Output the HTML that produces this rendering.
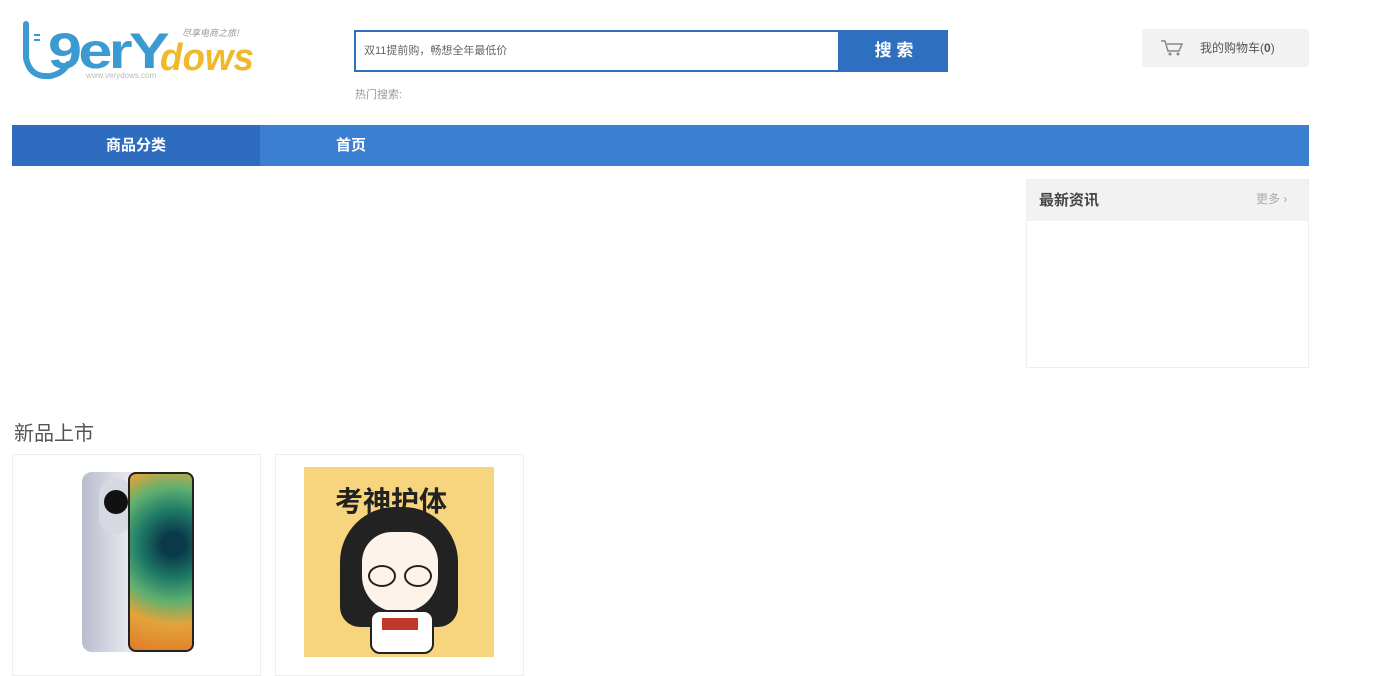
<!DOCTYPE html>
<html><head><meta charset="utf-8"><style>
body{margin:0;width:1378px;height:668px;background:#fff;font-family:"Liberation Sans","Noto Sans CJK SC",sans-serif;position:relative;overflow:hidden}
.a{position:absolute}
</style></head><body>
<!-- logo -->
<svg class="a" style="left:20px;top:18px" width="245" height="66" viewBox="0 0 245 66">
<path d="M6 6 V40 Q10 60 30 58 Q42 56 48 46" fill="none" stroke="#3b9ad0" stroke-width="6" stroke-linecap="round"/>
<rect x="14" y="16" width="6" height="2" fill="#3b9ad0"/><rect x="14" y="21" width="6" height="2" fill="#3b9ad0"/>
<text x="28" y="50" font-family="Liberation Sans" font-weight="bold" font-size="50" fill="#3b9ad0" letter-spacing="-3" textLength="118" lengthAdjust="spacingAndGlyphs">9erY</text>
<text x="140" y="52" font-family="Liberation Sans" font-weight="bold" font-style="italic" font-size="38" fill="#f0b92a" textLength="94" lengthAdjust="spacingAndGlyphs">dows</text>
<text x="162" y="18" font-family="Noto Sans CJK SC" font-style="italic" font-size="9" fill="#999">尽享电商之旅!</text>
<text x="66" y="60" font-size="8" fill="#bbb">www.verydows.com</text>
</svg>
<!-- search -->
<div class="a" style="left:354px;top:30px;width:482px;height:38px;border:2px solid #2f6fbf;font-size:11px;color:#666;line-height:38px;text-indent:8px;font-family:'Liberation Sans','Noto Sans CJK SC',sans-serif">双11提前购，畅想全年最低价</div>
<div class="a" style="left:840px;top:30px;width:108px;height:42px;background:#2f6fbf;color:#fff;font-weight:bold;font-size:17px;text-align:center;line-height:42px">搜 索</div>
<div class="a" style="left:355px;top:86px;font-size:11px;color:#999">热门搜索:</div>
<!-- cart -->
<div class="a" style="left:1142px;top:29px;width:167px;height:38px;background:#f2f2f2;border-radius:3px;font-size:12px;color:#555;line-height:38px">
<svg class="a" style="left:18px;top:10px" width="26" height="18" viewBox="0 0 26 18"><path d="M1 2h4l3 10h11l3-7H7" fill="none" stroke="#888" stroke-width="1.5"/><circle cx="10" cy="15" r="1.5" fill="#888"/><circle cx="18" cy="15" r="1.5" fill="#888"/></svg>
<span class="a" style="left:58px">我的购物车(<b>0</b>)</span></div>
<!-- nav -->
<div class="a" style="left:12px;top:125px;width:1297px;height:41px;background:#3a7fd0"></div>
<div class="a" style="left:12px;top:125px;width:248px;height:41px;background:#2d6cbf;color:#fff;font-weight:bold;font-size:15px;text-align:center;line-height:41px">商品分类</div>
<div class="a" style="left:336px;top:125px;color:#fff;font-weight:bold;font-size:15px;line-height:41px">首页</div>
<!-- news -->
<div class="a" style="left:1026px;top:179px;width:281px;height:187px;border:1px solid #eee"></div>
<div class="a" style="left:1027px;top:180px;width:281px;height:41px;background:#f2f2f2"></div>
<div class="a" style="left:1039px;top:180px;font-size:15px;color:#444;line-height:41px;font-weight:bold">最新资讯</div>
<div class="a" style="left:1256px;top:180px;font-size:12px;color:#aaa;line-height:38px">更多 ›</div>
<!-- new products -->
<div class="a" style="left:14px;top:417px;font-size:20px;color:#555">新品上市</div>
<div class="a" style="left:12px;top:454px;width:247px;height:220px;border:1px solid #eee"></div>
<div class="a" style="left:275px;top:454px;width:247px;height:220px;border:1px solid #eee"></div>
<!-- phone -->
<div class="a" style="left:82px;top:472px;width:90px;height:180px;border-radius:10px;background:linear-gradient(90deg,#b8bccc,#e6e7ee 50%,#a9adc0)"></div>
<div class="a" style="left:99px;top:478px;width:34px;height:56px;border-radius:17px;background:#d6d8e2"></div>
<div class="a" style="left:104px;top:490px;width:24px;height:24px;border-radius:12px;background:#111"></div>
<div class="a" style="left:128px;top:472px;width:66px;height:180px;border-radius:8px;background:radial-gradient(circle at 70% 40%,#0a3a4a 10%,#1f7a66 30%,#5fb070 50%,#e3a43a 70%,#e07a2a);border:2px solid #222;box-sizing:border-box"></div>
<!-- cartoon -->
<div class="a" style="left:304px;top:467px;width:190px;height:190px;background:#f7d57f"></div>
<div class="a" style="left:335px;top:480px;font-size:28px;font-weight:bold;color:#222;font-family:'Noto Sans CJK SC',sans-serif">考神护体</div>
<div class="a" style="left:340px;top:507px;width:118px;height:120px;border-radius:55px 55px 20px 20px;background:#222"></div>
<div class="a" style="left:362px;top:532px;width:76px;height:80px;border-radius:30px 30px 36px 36px;background:#fdf3ea"></div>
<div class="a" style="left:368px;top:565px;width:24px;height:18px;border-radius:50%;border:2px solid #222"></div>
<div class="a" style="left:404px;top:565px;width:24px;height:18px;border-radius:50%;border:2px solid #222"></div>
<div class="a" style="left:370px;top:610px;width:60px;height:40px;background:#fff;border:2px solid #222;border-radius:10px"></div>
<div class="a" style="left:382px;top:618px;width:36px;height:12px;background:#c0392b"></div>
</body></html>
